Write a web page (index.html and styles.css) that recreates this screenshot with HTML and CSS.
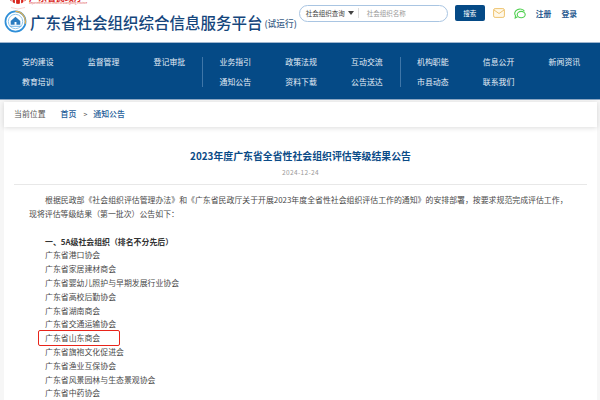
FILE: index.html
```html
<!DOCTYPE html>
<html lang="zh-CN">
<head>
<meta charset="utf-8">
<title>通知公告</title>
<link rel="stylesheet" href="styles.css">
</head>
<body>
<header class="header">
  <div class="strip">
    <svg class="emblem" viewBox="0 0 20 11" width="20" height="11"><path d="M0-6a10 10 0 0 0 20 0z" fill="#d9251c"/><path d="M4 0v5M7.500 0v6.500M12.500 0v6.500M16 0v5" stroke="#fff" stroke-width="1.200"/><path d="M3 7.500q7 3 14 0" stroke="#f6c9c4" stroke-width=".8" fill="none"/></svg>
    <div class="dept">
      <div class="dept-cn">广东省民政厅</div>
      <div class="dept-en">Department of Civil Affairs of Guangdong Province</div>
    </div>
  </div>
  <div class="brand">
    <svg class="logo" viewBox="0 0 24 24" width="23" height="23">
      <circle cx="12" cy="12" r="10.500" fill="none" stroke="#2f8fd8" stroke-width="1.800"/>
      <path d="M12 1.500a10.500 10.500 0 0 1 10 13" fill="none" stroke="#e9b04a" stroke-width="1.200"/>
      <circle cx="12" cy="12" r="7.500" fill="#fff" stroke="#8cc3ea" stroke-width="1"/>
      <path d="M7 15.500h10v-4l-5-4.500-5 4.500z" fill="#2b7cc0"/>
      <path d="M6 17h12" stroke="#6ab0e4" stroke-width="1"/>
      <path d="M11 15.500v-3h2v3z" fill="#fff"/>
    </svg>
    <div class="site-title">广东省社会组织综合信息服务平台</div>
    <div class="site-note">(试运行)</div>
  </div>
  <div class="tools">
    <form class="search">
      <span class="search-type">社会组织查询<i class="caret"></i></span>
      <span class="search-input">社会组织名称</span>
    </form>
    <button class="search-btn" type="button">搜索</button>
    <svg class="tool-icon" viewBox="0 0 12 10" width="12" height="10"><rect x=".6" y=".6" width="10.800" height="8.800" rx="1.500" fill="#fff8e8" stroke="#eec36f" stroke-width="1"/><path d="M1 2l5 3.500L11 2" fill="none" stroke="#eec36f" stroke-width="1"/></svg>
    <svg class="tool-icon wechat" viewBox="0 0 13 11" width="13" height="11"><path d="M11.500 3.200A5.200 4.300 0 1 0 2.500 7.700L2.200 10l2.300-1.300" fill="none" stroke="#4fd04f" stroke-width="1.100"/><ellipse cx="8.200" cy="6.600" rx="4" ry="3.200" fill="#fff" stroke="#4fd04f" stroke-width="1.100"/></svg>
    <a class="auth">注册</a>
    <a class="auth">登录</a>
  </div>
</header>

<nav class="nav">
  <div class="nav-group">
    <a>党的建设</a><a>监督管理</a><a>登记审批</a>
    <a>教育培训</a>
  </div>
  <div class="nav-group divided">
    <a>业务指引</a><a>政策法规</a><a>互动交流</a>
    <a>通知公告</a><a>资料下载</a><a>公告送达</a>
  </div>
  <div class="nav-group">
    <a>机构职能</a><a>信息公开</a><a>新闻资讯</a>
    <a>市县动态</a><a>联系我们</a>
  </div>
</nav>

<main class="main">
  <div class="crumbs">
    <span class="crumb-label">当前位置</span>
    <a class="crumb">首页</a>
    <span class="crumb-sep">&gt;</span>
    <a class="crumb">通知公告</a>
  </div>
  <article class="article">
    <h1 class="article-title">2023年度广东省全省性社会组织评估等级结果公告</h1>
    <div class="article-date">2024-12-24</div>
    <div class="article-body">
      <p class="lead">根据民政部《社会组织评估管理办法》和《广东省民政厅关于开展2023年度全省性社会组织评估工作的通知》的安排部署，按要求规范完成评估工作，现将评估等级结果（第一批次）公告如下：</p>
      <h2 class="section">一、5A级社会组织（排名不分先后）</h2>
      <ul class="orgs">
        <li>广东省港口协会</li>
        <li>广东省家居建材商会</li>
        <li>广东省婴幼儿照护与早期发展行业协会</li>
        <li>广东省高校后勤协会</li>
        <li>广东省湖南商会</li>
        <li>广东省交通运输协会</li>
        <li class="marked">广东省山东商会</li>
        <li>广东省旗袍文化促进会</li>
        <li>广东省渔业互保协会</li>
        <li>广东省风景园林与生态景观协会</li>
        <li>广东省中药协会</li>
      </ul>
    </div>
  </article>
</main>
</body>
</html>
```
FILE: styles.css
```css
* { box-sizing: border-box; }
html, body { margin: 0; height: 400px; overflow: hidden; }
body {
  background: #f6f6f6;
  font-family: "Noto Sans CJK SC", "Noto Sans", sans-serif;
  color: #444;
}
a { color: inherit; text-decoration: none; }

.header {
  position: relative;
  height: 42px;
  background: #fff;
  overflow: hidden;
  display: flex;
  justify-content: space-between;
}
.strip {
  position: absolute;
  left: 8px;
  top: 0;
  display: flex;
  gap: 1px;
}
.emblem { display: block; }
.dept { margin-top: -7px; margin-left: 0; }
.dept-cn { font-size: 9px; line-height: 9px; font-weight: 700; color: #d9251c; }
.dept-en { font-size: 2.500px; line-height: 3px; color: #e2524a; white-space: nowrap; }

.brand {
  display: flex;
  align-items: center;
  padding: 10px 0 0 4px;
  box-sizing: content-box;
  height: 23px;
}
.logo { display: block; flex: none; }
.site-title {
  margin-left: 3px;
  font-size: 15.500px;
  line-height: 20px;
  font-weight: 500;
  color: #15467c;
  white-space: nowrap;
}
.site-note {
  margin: 4px 0 0 2px;
  font-size: 8.700px;
  font-weight: 500;
  color: #3c5f88;
  white-space: nowrap;
}

.tools {
  display: flex;
  align-items: center;
  height: 16px;
  margin-top: 5px;
  padding-right: 23px;
}
.search {
  width: 149px;
  height: 17px;
  border: 1px solid #a9c5e2;
  border-radius: 9px;
  display: flex;
  align-items: center;
  font-size: 6.500px;
}
.search-type {
  display: flex;
  align-items: center;
  width: 59px;
  padding-left: 6px;
  color: #444;
  border-right: 1px solid #ddd;
  height: 10px;
}
.caret {
  margin-left: 3px;
  border: 3px solid transparent;
  border-top: 4px solid #444;
  border-bottom: 0;
}
.search-input { padding-left: 8px; color: #999; }
.search-btn {
  margin-left: 7px;
  width: 30px;
  height: 16px;
  padding: 0;
  border: 0;
  border-radius: 2px;
  background: #054a86;
  color: #fff;
  font: 6.500px "Noto Sans CJK SC", sans-serif;
}
.tool-icon { margin-left: 8px; display: block; flex: none; }
.wechat { margin-left: 8px; }
.auth {
  margin-left: 10px;
  font-size: 7.800px;
  font-weight: 700;
  color: #2a5a8f;
  white-space: nowrap;
}

.nav {
  height: 58px;
  background: #054a86;
  border-top: 1px solid #9fb6cf;
  border-bottom: 1px solid #8fa9c6;
  display: grid;
  grid-template-columns: 197.500px 197.500px 1fr;
  padding: 0 0 0 22px;
  align-items: start;
}
.nav-group {
  display: grid;
  grid-template-columns: repeat(3, 65.800px);
  grid-auto-rows: 20px;
  margin-top: 9px;
  font-size: 7.900px;
  line-height: 10px;
  color: #e4edf6;
  white-space: nowrap;
  align-items: center;
}
.divided { position: relative; }
.divided::before, .divided::after {
  content: "";
  position: absolute;
  top: 5px;
  height: 30px;
  border-left: 1px solid #3f76a8;
}
.divided::before { left: -17.500px; }
.divided::after { left: 180px; }

.main {
  margin: 2px 3px 0 4px;
  background: #fff;
  height: 300px;
}
.crumbs {
  height: 25px;
  display: flex;
  align-items: center;
  padding: 0 0 2px 10px;
  font-size: 7.900px;
  background: #fff;
  box-shadow: 0 1px 5px rgba(0, 0, 0, .14);
}
.crumb-label { color: #555; margin-right: 15px; }
.crumb { color: #1d5c98; font-weight: 500; }
.crumb-sep { margin: 0 6px 0 7px; color: #555; font-size: 7px; }

.article { padding: 0 10px; }
.article-title {
  margin: 0;
  padding-top: 22px;
  font-size: 9.900px;
  line-height: 15px;
  font-weight: 700;
  color: #0b4b87;
  text-align: center;
}
.article-date {
  margin-top: 3px;
  height: 18px;
  font-size: 6.500px;
  line-height: 10px;
  letter-spacing: .35px;
  color: #999;
  text-align: center;
  border-bottom: 1px solid #e8e8e8;
}
.article-body {
  padding: 8px 15px 0;
  font-size: 7.900px;
  line-height: 13.800px;
  color: #4a4a4a;
}
.lead { margin: 0; text-indent: 16px; width: 540px; }
.section {
  margin: 14px 0 0 16px;
  font: inherit;
  font-weight: 700;
  color: #333;
}
.orgs { list-style: none; margin: 0; padding: 0 0 0 16px; }
.marked {
  width: 80px;
  margin-left: -6px;
  padding-left: 6px;
  outline: 1px solid #e8241a;
  border-radius: 1px;
}
```
